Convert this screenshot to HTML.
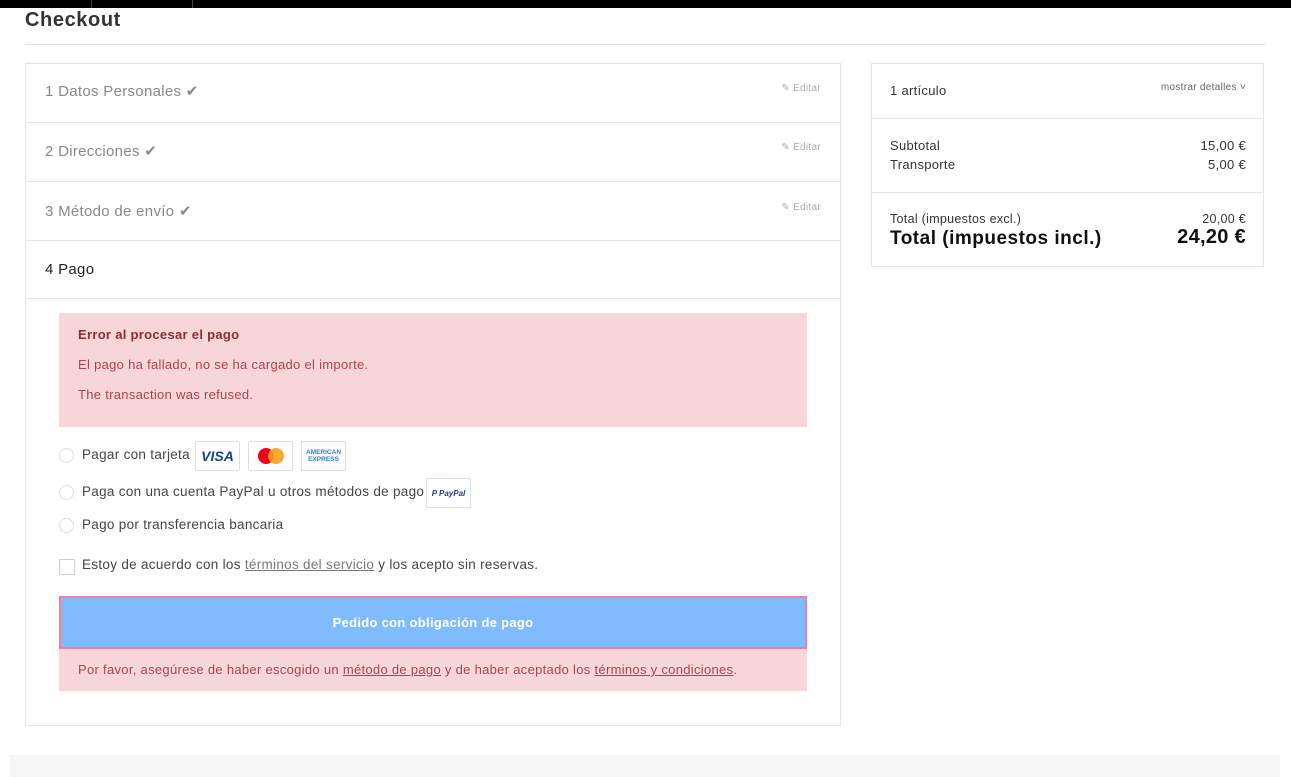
<!DOCTYPE html>
<html><head><meta charset="utf-8"><style>
*{box-sizing:border-box;margin:0;padding:0}
body{width:1291px;height:777px;background:#fff;font-family:"Liberation Sans",sans-serif;color:#333;position:relative;overflow:hidden;letter-spacing:.3px}
.abs{position:absolute}
.topbar{left:0;top:0;width:1291px;height:8px;background:#000}
h1{position:absolute;left:25px;top:9px;font-size:20px;font-weight:bold;color:#333;letter-spacing:.6px}
.hr{left:25px;top:44px;width:1240px;height:1px;background:#ddd}
.box{border:1px solid #e5e5e5}
.step{position:absolute;left:25px;width:816px;border-top:1px solid #e5e5e5;font-size:15px;color:#888}
.step span{position:absolute;left:20px}
.edit{position:absolute;right:20px;font-size:10px;color:#aaa}
.err{background:#f6d6d9;color:#a8454f;font-size:13px}
.radio{width:15px;height:15px;border:1px solid #ddd;border-radius:50%;position:absolute}
.card{position:absolute;border:1px solid #ddd;border-radius:2px;height:30px;background:#fff;display:flex;align-items:center;justify-content:center;letter-spacing:0}
.t14{font-size:13.5px;color:#444}
</style></head><body>
<div class="abs topbar"></div>
<div class="abs" style="left:91px;top:0;width:1px;height:8px;background:#444"></div>
<div class="abs" style="left:192px;top:0;width:1px;height:8px;background:#444"></div>
<h1>Checkout</h1>
<div class="abs hr"></div>

<div class="abs box" style="left:25px;top:63px;width:816px;height:663px"></div>
<div class="step" style="top:63px;height:59px;border-top:none"><span style="top:19px">1 Datos Personales ✔</span><div class="edit" style="top:20px">✎ Editar</div></div>
<div class="step" style="top:122px;height:59px"><span style="top:19px">2 Direcciones ✔</span><div class="edit" style="top:19px">✎ Editar</div></div>
<div class="step" style="top:181px;height:59px"><span style="top:20px">3 Método de envío ✔</span><div class="edit" style="top:20px">✎ Editar</div></div>
<div class="step" style="top:240px;height:59px;color:#222;border-bottom:1px solid #e5e5e5"><span style="top:20px">4 Pago</span></div>

<div class="abs err" style="left:59px;top:313px;width:748px;height:114px">
<div class="abs" style="left:19px;top:14px;font-weight:bold;color:#8a2e37">Error al procesar el pago</div>
<div class="abs" style="left:19px;top:44px">El pago ha fallado, no se ha cargado el importe.</div>
<div class="abs" style="left:19px;top:74px">The transaction was refused.</div>
</div>

<div class="radio" style="left:59px;top:448px"></div>
<div class="abs t14" style="left:82px;top:447px">Pagar con tarjeta</div>
<div class="card" style="left:195px;top:441px;width:45px"><b style="color:#1a3d8f;font-style:italic;font-size:14px">VISA</b></div>
<div class="card" style="left:248px;top:441px;width:45px"><svg width="30" height="18"><circle cx="10" cy="9" r="8" fill="#eb001b"/><circle cx="20" cy="9" r="8" fill="#f79e1b" opacity=".9"/></svg></div>
<div class="card" style="left:301px;top:441px;width:45px"><span style="color:#2a7bd0;font-size:6.5px;font-weight:bold;text-align:center;line-height:7px">AMERICAN<br>EXPRESS</span></div>

<div class="radio" style="left:59px;top:485px"></div>
<div class="abs t14" style="left:82px;top:484px">Paga con una cuenta PayPal u otros métodos de pago</div>
<div class="card" style="left:426px;top:478px;width:45px"><i style="color:#1a3d8f;font-size:8px;font-weight:bold">P PayPal</i></div>

<div class="radio" style="left:59px;top:518px"></div>
<div class="abs t14" style="left:82px;top:517px">Pago por transferencia bancaria</div>

<div class="abs" style="left:59px;top:559px;width:16px;height:16px;border:1px solid #ccc"></div>
<div class="abs t14" style="left:82px;top:557px">Estoy de acuerdo con los <u style="color:#777">términos del servicio</u> y los acepto sin reservas.</div>

<div class="abs" style="left:59px;top:596px;width:748px;height:53px;background:#7fbbfd;border:2px solid #ef7fa0;color:#fff;font-weight:bold;font-size:13px;text-align:center;line-height:49px">Pedido con obligación de pago</div>
<div class="abs err" style="left:59px;top:649px;width:748px;height:42px;line-height:42px;padding-left:19px">Por favor, asegúrese de haber escogido un <u>método de pago</u> y de haber aceptado los <u>términos y condiciones</u>.</div>

<div class="abs box" style="left:871px;top:63px;width:393px;height:204px">
<div class="abs" style="left:18px;top:19px;font-size:13px">1 artículo</div>
<div class="abs" style="right:17px;top:18px;font-size:10px;color:#666">mostrar detalles ˅</div>
<div class="abs" style="left:0;top:54px;width:391px;height:1px;background:#e5e5e5"></div>
<div class="abs" style="left:18px;top:74px;font-size:13px">Subtotal</div><div class="abs" style="right:17px;top:74px;font-size:13px">15,00 €</div>
<div class="abs" style="left:18px;top:93px;font-size:13px">Transporte</div><div class="abs" style="right:17px;top:93px;font-size:13px">5,00 €</div>
<div class="abs" style="left:0;top:128px;width:391px;height:1px;background:#e5e5e5"></div>
<div class="abs" style="left:18px;top:148px;font-size:12.5px">Total (impuestos excl.)</div><div class="abs" style="right:17px;top:148px;font-size:12.5px">20,00 €</div>
<div class="abs" style="left:18px;top:164px;font-size:19px;font-weight:bold;color:#111;letter-spacing:.5px">Total (impuestos incl.)</div><div class="abs" style="right:17px;top:162px;font-size:20px;font-weight:bold;color:#111">24,20 €</div>
</div>

<div class="abs" style="left:10px;top:755px;width:1270px;height:22px;background:#f6f6f6"></div>
</body></html>
